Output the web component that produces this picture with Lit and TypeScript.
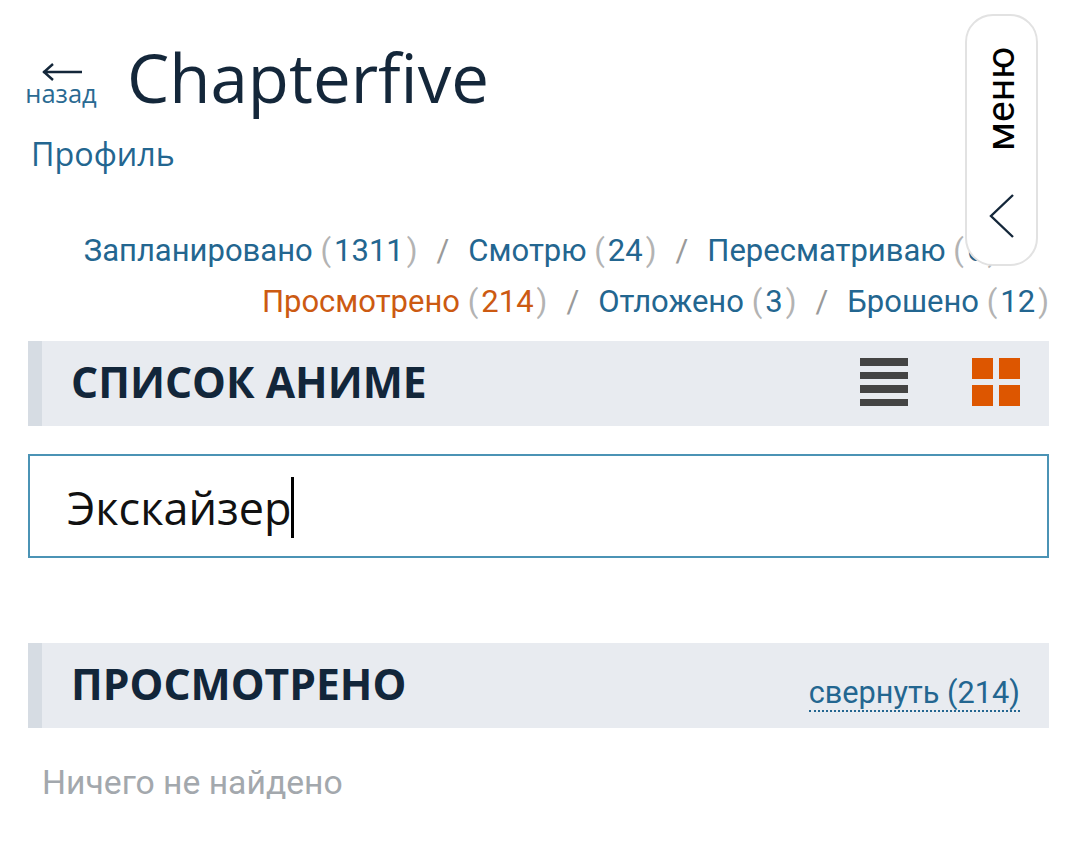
import { LitElement, html, css } from 'lit';
import { customElement, state } from 'lit/decorators.js';

type Filter = { name: string; count: number; active?: boolean };

@customElement('app-root')
export class AppRoot extends LitElement {
    @state()
    query = 'Экскайзер';

    filters: Filter[] = [
        { name: 'Запланировано', count: 1311 },
        { name: 'Смотрю', count: 24 },
        { name: 'Пересматриваю', count: 6 },
        { name: 'Просмотрено', count: 214, active: true },
        { name: 'Отложено', count: 3 },
        { name: 'Брошено', count: 12 },
    ];

    static styles = css`
    :host{
        display: block;
        position: relative;
        height: 860px;
        padding: 38px 31px 0 28px;
        box-sizing: border-box;
        background: #fff;
        font-family: "Open Sans", sans-serif;
        color: #14273a;
        overflow: hidden;
    }
    .head{
        display: flex;
        align-items: flex-start;
    }
    .back{
        width: 70px;
        margin: 0 31px 0 -2px;
        display: flex;
        flex-direction: column;
        align-items: center;
        padding-top: 24px;
        color: #2a6a92;
        font-size: 25.5px;
        line-height: 30px;
    }
    .back svg{
        display: block;
        margin-left: 2px;
        margin-bottom: -4px;
    }
    h1{
        margin: 0;
        font-size: 67.2px;
        line-height: 78px;
        font-weight: 400;
    }
    .profile{
        display: block;
        margin: 18px 0 0 3px;
        font-size: 32.3px;
        line-height: 38px;
        color: #236690;
    }
    .filters{
        margin-top: 53px;
        text-align: right;
        font-family: Roboto, sans-serif;
        font-size: 31px;
        line-height: 51px;
        color: #236690;
        height: 102px;
    }
    .filter{
        white-space: nowrap;
    }
    .filter.active{
        color: #cc5a12;
    }
    .par{
        color: #b3b3b3;
    }
    .par.open{
        margin-right: 3px;
    }
    .par.close{
        margin-left: 3px;
    }
    .sep{
        color: #9a9a9a;
        margin: 0 19px;
    }
    .bar{
        display: flex;
        align-items: center;
        justify-content: space-between;
        height: 85px;
        background: #e8ebf0;
        border-left: 14px solid #d6dce3;
        padding-right: 29px;
    }
    .bar.first{
        margin-top: 14px;
    }
    h2{
        margin: 0 0 0 29px;
        padding-bottom: 5px;
        font-size: 42.6px;
        line-height: 50px;
        font-weight: 700;
        color: #12263a;
    }
    .views{
        display: flex;
        gap: 64px;
        margin-bottom: 3px;
    }
    .views svg{
        display: block;
    }
    .search{
        display: flex;
        align-items: center;
        height: 104px;
        margin-top: 28px;
        padding: 2px 0 0 37px;
        box-sizing: border-box;
        border: 2px solid #4b93b5;
        font-size: 45px;
        color: #111;
    }
    .caret{
        width: 3px;
        height: 61px;
        background: #000;
        margin-left: -1px;
        margin-top: 1px;
    }
    .bar.second{
        margin-top: 85px;
    }
    .collapse{
        font-family: Roboto, sans-serif;
        font-size: 30.7px;
        line-height: 35px;
        color: #236690;
        border-bottom: 2px dotted #236690;
        margin-top: 15px;
    }
    .empty{
        margin: 35px 0 0 14px;
        font-family: Roboto, sans-serif;
        font-size: 33.7px;
        line-height: 40px;
        color: #a3a8ad;
    }
    .menu{
        position: absolute;
        left: 965px;
        top: 14px;
        width: 73px;
        height: 252px;
        box-sizing: border-box;
        background: #fff;
        border: 2px solid #e2e2e2;
        border-radius: 28px;
    }
    .menu span{
        position: absolute;
        left: 15px;
        top: 31px;
        writing-mode: vertical-rl;
        transform: rotate(180deg);
        font-family: Roboto, sans-serif;
        font-size: 39px;
        line-height: 39px;
        color: #000;
    }
    .menu svg{
        position: absolute;
        left: 22px;
        top: 177px;
    }
    `;

    private renderFilter(f: Filter, i: number) {
        return html`<span class="filter ${f.active ? 'active' : ''}">${f.name} <span class="par open">(</span>${f.count}<span class="par close">)</span></span>${i === 2
            ? html`<span class="sep">/</span><br>`
            : i < this.filters.length - 1 ? html`<span class="sep">/</span>` : ''}`;
    }

    render() {
        return html`
        <div class="head">
            <div class="back">
                <svg width="40" height="20" viewBox="0 0 40 20">
                    <path d="M1 10H40M11 2L2 10l9 8" fill="none" stroke="#14273a" stroke-width="2.4"/>
                </svg>
                назад
            </div>
            <h1>Chapterfive</h1>
        </div>
        <a class="profile">Профиль</a>
        <div class="filters">
            ${this.filters.map((f, i) => this.renderFilter(f, i))}
        </div>
        <div class="bar first">
            <h2>СПИСОК АНИМЕ</h2>
            <div class="views">
                <svg width="48" height="48" viewBox="0 0 48 48" fill="#444">
                    <rect y="0" width="48" height="8"/>
                    <rect y="14" width="48" height="7"/>
                    <rect y="27" width="48" height="8"/>
                    <rect y="41" width="48" height="7"/>
                </svg>
                <svg width="48" height="48" viewBox="0 0 48 48" fill="#dd5600">
                    <rect width="21" height="21"/>
                    <rect x="27" width="21" height="21"/>
                    <rect y="27" width="21" height="21"/>
                    <rect x="27" y="27" width="21" height="21"/>
                </svg>
            </div>
        </div>
        <div class="search">${this.query}<i class="caret"></i></div>
        <div class="bar second">
            <h2>ПРОСМОТРЕНО</h2>
            <a class="collapse">свернуть (214)</a>
        </div>
        <div class="empty">Ничего не найдено</div>
        <div class="menu">
            <span>меню</span>
            <svg width="26" height="46" viewBox="0 0 26 46">
                <path d="M24 2L2 23l22 21" fill="none" stroke="#14273a" stroke-width="2.4"/>
            </svg>
        </div>`;
    }
}
